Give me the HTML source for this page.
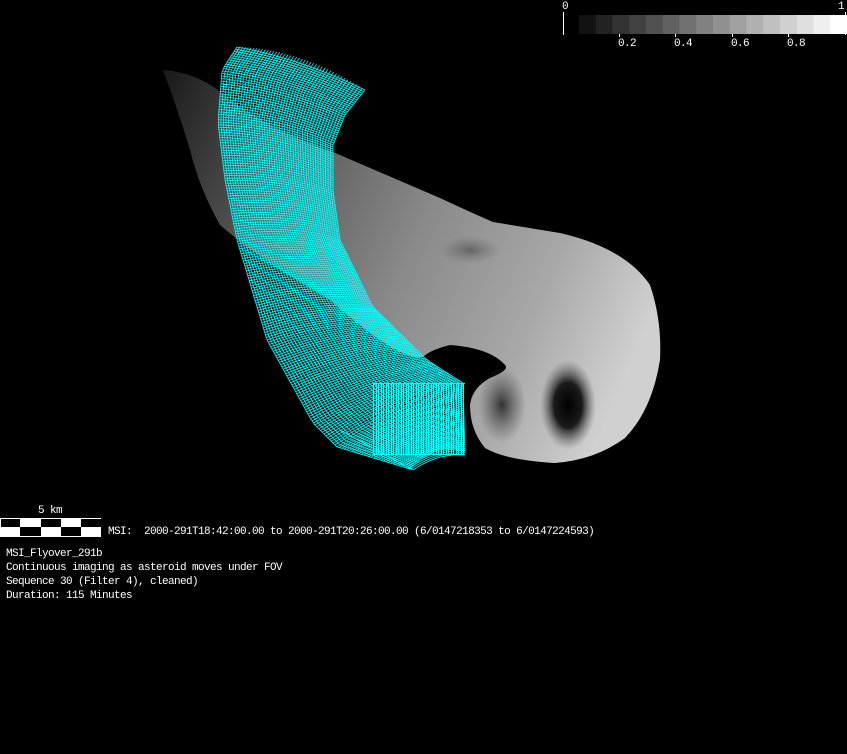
<!DOCTYPE html>
<html><head><meta charset="utf-8"><style>
html,body{margin:0;padding:0;background:#000;width:847px;height:754px;overflow:hidden}
.t{position:absolute;color:#fff;font:11px/14px "Liberation Mono","DejaVu Sans Mono",monospace;white-space:pre;letter-spacing:-0.6px}
</style></head><body>
<svg id="s" width="847" height="754" style="position:absolute;left:0;top:0" xmlns="http://www.w3.org/2000/svg">
<defs>
<linearGradient id="g" x1="160" y1="80" x2="660" y2="300" gradientUnits="userSpaceOnUse">
<stop offset="0" stop-color="#1a1a1a"/><stop offset="0.25" stop-color="#555"/><stop offset="0.55" stop-color="#8a8a8a"/><stop offset="0.8" stop-color="#a8a8a8"/><stop offset="1" stop-color="#d0d0d0"/></linearGradient>
<radialGradient id="c1"><stop offset="0" stop-color="#000"/><stop offset="0.5" stop-color="#1a1a1a"/><stop offset="1" stop-color="#666" stop-opacity="0"/></radialGradient>
<radialGradient id="c2"><stop offset="0" stop-color="#333"/><stop offset="1" stop-color="#555" stop-opacity="0"/></radialGradient>
</defs>
<path fill="url(#g)" d="M163,70 Q200,72 230,100 Q280,135 333,152 L440,198 Q470,212 493,222 Q530,228 560,233 Q625,248 650,285 Q662,320 660,360 Q652,410 625,438 Q595,460 555,463 Q505,460 485,448 Q470,430 470,405 Q472,388 490,378 Q510,370 505,365 Q490,348 450,345 Q430,350 423,357 Q400,362 330,300 Q260,260 220,225 Q200,190 190,150 Q178,110 163,70Z"/>
<ellipse cx="568" cy="405" rx="28" ry="45" fill="url(#c1)"/>
<ellipse cx="502" cy="405" rx="24" ry="38" fill="url(#c2)"/>
<ellipse cx="470" cy="250" rx="30" ry="14" fill="url(#c2)" opacity="0.5"/>
<g id="w" stroke="#00ffff" stroke-width="0.8" fill="none"></g>
<g id="cb"></g>
<line x1="563.5" y1="12" x2="563.5" y2="35" stroke="#fff"/>
<line x1="845.5" y1="12" x2="845.5" y2="35" stroke="#fff"/>
<g stroke="#fff"><line x1="619.5" y1="34" x2="619.5" y2="37"/><line x1="675.5" y1="34" x2="675.5" y2="37"/><line x1="732.5" y1="34" x2="732.5" y2="37"/><line x1="788.5" y1="34" x2="788.5" y2="37"/></g>
<rect x="0" y="518" width="101" height="19" fill="#fff"/>
<g fill="#000"><rect x="1" y="519" width="19" height="8"/><rect x="41" y="519" width="20" height="8"/><rect x="81" y="519" width="20" height="8"/><rect x="20" y="527" width="21" height="9"/><rect x="61" y="527" width="20" height="9"/></g>
</svg>
<div class="t" style="left:562px;top:0px">0</div>
<div class="t" style="left:838px;top:0px">1</div>
<div class="t" style="left:618px;top:37px">0.2</div>
<div class="t" style="left:674px;top:37px">0.4</div>
<div class="t" style="left:731px;top:37px">0.6</div>
<div class="t" style="left:787px;top:37px">0.8</div>
<div class="t" style="left:38px;top:504px">5 km</div>
<div class="t" style="left:108px;top:525px">MSI:  2000-291T18:42:00.00 to 2000-291T20:26:00.00 (6/0147218353 to 6/0147224593)</div>
<div class="t" style="left:6px;top:547px">MSI_Flyover_291b
Continuous imaging as asteroid moves under FOV
Sequence 30 (Filter 4), cleaned)
Duration: 115 Minutes</div>
<script>
var NS="http://www.w3.org/2000/svg";
var cb=document.getElementById('cb');
for(var i=0;i<16;i++){var r=document.createElementNS(NS,'rect');var x0=579+i*16.75;r.setAttribute('x',x0);r.setAttribute('y',15);r.setAttribute('width',17);r.setAttribute('height',19);var v=Math.round(18+i*(237/15));r.setAttribute('fill','rgb('+v+','+v+','+v+')');cb.appendChild(r);}
function res(P,n){var d=[0];for(var i=1;i<P.length;i++)d.push(d[i-1]+Math.hypot(P[i][0]-P[i-1][0],P[i][1]-P[i-1][1]));var T=d[d.length-1],o=[],j=0;for(var k=0;k<n;k++){var s=T*k/(n-1);while(j<P.length-2&&d[j+1]<s)j++;var f=(s-d[j])/(d[j+1]-d[j]||1);o.push([P[j][0]+(P[j+1][0]-P[j][0])*f,P[j][1]+(P[j+1][1]-P[j][1])*f]);}return o;}
var L=[[237,47],[222,70],[218,123],[225,180],[237,240],[267,340],[313,423],[337,447],[413,470]];
var R=[[365,90],[345,115],[333,145],[333,190],[340,240],[373,307],[427,360],[463,383],[465,455]];
var N=200,l=res(L,N),r=res(R,N),w=document.getElementById('w'),d="";
for(var i=0;i<N;i++){d+="M"+l[i][0].toFixed(1)+" "+l[i][1].toFixed(1)+"Q"+((l[i][0]+r[i][0])/2).toFixed(1)+" "+((l[i][1]+r[i][1])/2-10).toFixed(1)+" "+r[i][0].toFixed(1)+" "+r[i][1].toFixed(1);}
for(var k=0;k<=45;k++){var f=k/45;d+="M";for(var i=0;i<N;i+=3){var x=l[i][0]+(r[i][0]-l[i][0])*f,y=l[i][1]+(r[i][1]-l[i][1])*f-10*4*f*(1-f);d+=(i?"L":"")+x.toFixed(1)+" "+y.toFixed(1);}}
d+="M340 430L413 470";
var p=document.createElementNS(NS,'path');p.setAttribute('d',d);w.appendChild(p);
var b="";for(var x=373;x<=465;x+=2.5){b+="M"+(Math.round(x)+0.5)+" 383V455";}b+="M373 383.5H465M373 454.5H465";
var q=document.createElementNS(NS,'path');q.setAttribute('d',b);q.setAttribute('stroke','#00ffff');q.setAttribute('stroke-width','1');q.setAttribute('fill','none');q.setAttribute('shape-rendering','crispEdges');document.getElementById('s').insertBefore(q,document.getElementById('cb'));
</script>
</body></html>
